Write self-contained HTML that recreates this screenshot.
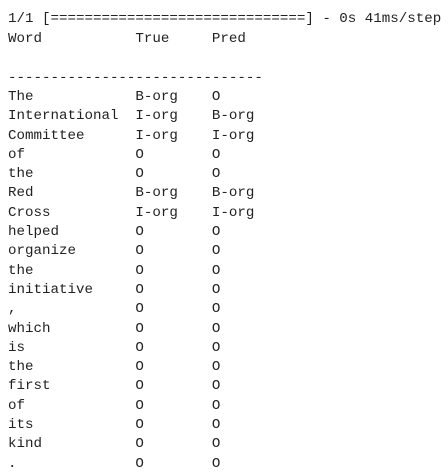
<!DOCTYPE html>
<html><head><meta charset="utf-8"><style>
html,body{margin:0;padding:0;background:#fff;width:448px;height:467px;overflow:hidden}
pre{margin:0;position:absolute;left:8px;font-family:"Liberation Mono",monospace;font-size:14.17px;color:#222}
#h{top:8.5px;line-height:20px}
#b{top:68.7px;line-height:19.3px}
</style></head><body><pre id="h">1/1 [==============================] - 0s 41ms/step
Word           True     Pred</pre><pre id="b">------------------------------
The            B-org    O
International  I-org    B-org
Committee      I-org    I-org
of             O        O
the            O        O
Red            B-org    B-org
Cross          I-org    I-org
helped         O        O
organize       O        O
the            O        O
initiative     O        O
,              O        O
which          O        O
is             O        O
the            O        O
first          O        O
of             O        O
its            O        O
kind           O        O
.              O        O</pre></body></html>
